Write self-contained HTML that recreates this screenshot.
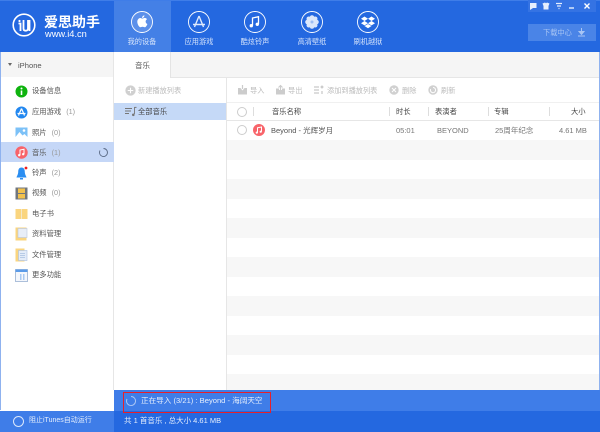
<!DOCTYPE html>
<html><head><meta charset="utf-8"><style>
html,body{margin:0;padding:0;width:600px;height:432px;overflow:hidden;background:#fff}
body{position:relative;font-family:"Liberation Sans","Noto Sans CJK SC",sans-serif;font-size:7.5px;color:#555}
#w{position:absolute;left:0;top:0;width:600px;height:432px;filter:blur(.25px)}
.a{position:absolute}
.t{position:absolute;white-space:nowrap;line-height:12px}
svg{position:absolute;overflow:visible}
.nav{position:absolute;top:37px;width:56px;text-align:center;color:#d3e2fb;font-size:7.2px;line-height:10px}
.side{position:absolute;left:32px;font-size:7.3px;color:#555;line-height:12px;white-space:nowrap}
.side i{font-style:normal;color:#999;margin-left:5px}
.th{position:absolute;top:106px;font-size:7.3px;color:#444;line-height:12px;white-space:nowrap}
.sep{position:absolute;top:107px;width:1px;height:9px;background:#ddd}
.td{position:absolute;top:125px;font-size:7.5px;color:#777;line-height:12px;white-space:nowrap}
.tb{position:absolute;top:85px;font-size:7.2px;color:#bbb;line-height:12px;white-space:nowrap}
</style></head><body><div id="w">
<div class="a" style="left:0;top:0;width:600px;height:52px;background:#2468e0"></div>
<div class="a" style="left:114px;top:0;width:57px;height:52px;background:#4480e6"></div>
<div class="a" style="left:0;top:0;width:600px;height:1px;background:#3f7de8"></div>

<svg style="left:12px;top:13px" width="24" height="24" viewBox="0 0 24 24"><circle cx="12" cy="12" r="10.8" fill="none" stroke="#fff" stroke-width="1.6"/><path d="M6.500 10.500h2v7.500M11.500 7v8.500q0 2.200 2.200 2.200t2.300-2.200V7M17.500 7v11" fill="none" stroke="#fff" stroke-width="1.800"/><circle cx="7.500" cy="8" r="1.100" fill="#fff"/></svg>
<div class="t" style="left:44px;top:14px;font-size:14px;line-height:16px;color:#fff;font-weight:bold">爱思助手</div>
<div class="t" style="left:45px;top:29px;font-size:9.300px;line-height:11px;color:#fff">www.i4.cn</div>

<svg style="left:131px;top:11px" width="22" height="22" viewBox="0 0 22 22"><circle cx="11" cy="11" r="10.500" fill="#5c90ea" stroke="#fff" stroke-width=".9"/><path d="M11.200 7.600c1-.1 1.700-.7 2.400-.7 1 0 1.900.5 2.400 1.300-2 1.200-1.700 3.900.4 4.800-.5 1.400-1.500 3.300-2.700 3.300-.8 0-1.100-.5-2.100-.5s-1.400.5-2.200.5C8.200 16.300 6.300 13.300 6.300 10.800c0-2.200 1.500-3.800 3-3.800.8 0 1.400.6 1.900.6zM11 7c0-1.300 1-2.500 2.400-2.700.1 1.500-1 2.700-2.400 2.700z" fill="#fff"/></svg>
<div class="nav" style="left:114px">我的设备</div>

<svg style="left:188px;top:11px" width="22" height="22" viewBox="0 0 22 22"><circle cx="11" cy="11" r="10.500" fill="#2468e0" stroke="#fff" stroke-width=".9"/><path d="M11 5l-4.500 11M11 5l4.500 11M5 13.500h12" fill="none" stroke="#dfeafc" stroke-width="1.400"/></svg>
<div class="nav" style="left:171px">应用游戏</div>

<svg style="left:244px;top:11px" width="22" height="22" viewBox="0 0 22 22"><circle cx="11" cy="11" r="10.500" fill="#2468e0" stroke="#fff" stroke-width=".9"/><path d="M8.500 14.500V7l6-1.300v7.300" fill="none" stroke="#fff" stroke-width="1.300"/><circle cx="7.300" cy="14.700" r="1.700" fill="#fff"/><circle cx="13.300" cy="13.300" r="1.700" fill="#fff"/></svg>
<div class="nav" style="left:227px">酷炫铃声</div>

<svg style="left:301px;top:11px" width="22" height="22" viewBox="0 0 22 22"><circle cx="11" cy="11" r="10.500" fill="#2468e0" stroke="#fff" stroke-width=".9"/><g fill="#dbe7fb"><circle cx="11" cy="6.500" r="2.300"/><circle cx="11" cy="15.500" r="2.300"/><circle cx="6.500" cy="11" r="2.300"/><circle cx="15.500" cy="11" r="2.300"/><circle cx="7.800" cy="7.800" r="2.300"/><circle cx="14.200" cy="7.800" r="2.300"/><circle cx="7.800" cy="14.200" r="2.300"/><circle cx="14.200" cy="14.200" r="2.300"/><circle cx="11" cy="11" r="4"/></g><circle cx="11" cy="11" r="1.500" fill="#9dbdf2"/></svg>
<div class="nav" style="left:284px">高清壁纸</div>

<svg style="left:357px;top:11px" width="22" height="22" viewBox="0 0 22 22"><circle cx="11" cy="11" r="10.500" fill="#2468e0" stroke="#fff" stroke-width=".9"/><path d="M7.500 5.500l3.500 2.300-3.500 2.200L4 7.800zM14.500 5.500L18 7.800l-3.500 2.200L11 7.800zM7.500 10l3.500 2.200-3.500 2.200L4 12.200zM14.500 10l3.500 2.200-3.500 2.200-3.500-2.200zM7.500 15l3.500-2 3.500 2-3.500 2.200z" fill="#fff"/></svg>
<div class="nav" style="left:340px">刷机越狱</div>

<div class="a" style="left:528px;top:0;width:68px;height:12px;background:#3573e3"></div>
<svg style="left:530px;top:2px" width="66" height="9" viewBox="0 0 66 9"><path d="M0 1h6.500v5H3L0 8z" fill="#e6effd"/><path d="M12.500 1.500l2.500-1 1 .8 1-.8 2.500 1-1 2.500v3.500h-5V4z" fill="#e6effd"/><path d="M26 1.500h6M27 4h4M28.500 6.500h1" stroke="#e6effd" stroke-width="1.300"/><path d="M39 6h5" stroke="#e6effd" stroke-width="1.400"/><path d="M54.500 1.500l5 5M59.500 1.500l-5 5" stroke="#fff" stroke-width="1.400"/></svg>
<div class="a" style="left:528px;top:24px;width:68px;height:17px;background:#4a84e7"></div>
<div class="t" style="left:543px;top:27px;font-size:7.200px;color:#a8c5f4">下载中心</div>
<svg style="left:577px;top:28px" width="9" height="9" viewBox="0 0 9 9"><path d="M4.500 0v4M2 3.500h5L4.500 6.500zM1 8h7" fill="#a8c5f4" stroke="#a8c5f4" stroke-width="1"/></svg>

<!-- sidebar -->
<div class="a" style="left:0;top:52px;width:114px;height:338px;background:#fff"></div>
<div class="a" style="left:0;top:52px;width:114px;height:25px;background:#f5f5f5"></div>
<div class="a" style="left:0;top:52px;width:1px;height:358px;background:#8fb2ef"></div>
<div class="a" style="left:113px;top:52px;width:1px;height:338px;background:#e6e6e6"></div>
<div class="a" style="left:8px;top:63px;width:0;height:0;border-left:2.500px solid transparent;border-right:2.500px solid transparent;border-top:3.500px solid #666"></div>
<div class="t" style="left:18px;top:60px;font-size:7.600px;color:#555">iPhone</div>

<div class="a" style="left:1px;top:142px;width:113px;height:20px;background:#c5d7f7"></div>

<svg style="left:15px;top:85px" width="13" height="13" viewBox="0 0 13 13"><circle cx="6.500" cy="6.500" r="6" fill="#0fb30f"/><path d="M6.500 5.500v4.500" stroke="#fff" stroke-width="1.600"/><circle cx="6.500" cy="3.500" r="1" fill="#fff"/></svg>
<div class="side" style="top:85px">设备信息</div>
<svg style="left:15px;top:106px" width="13" height="13" viewBox="0 0 13 13"><circle cx="6.500" cy="6.500" r="6" fill="#2388f0"/><path d="M6.500 2.500L3.500 9.500M6.500 2.500l3 7M2.500 7.500h8" fill="none" stroke="#fff" stroke-width="1.200"/></svg>
<div class="side" style="top:106px">应用游戏<i>(1)</i></div>
<svg style="left:15px;top:127px" width="13" height="12" viewBox="0 0 13 12"><rect x="0.500" y="0.500" width="12" height="11" fill="#7cc1f7"/><circle cx="9" cy="3.500" r="1.300" fill="#fff"/><path d="M0.500 10L4.500 5l3 3.500 2-1.500 3 3v1.500h-12z" fill="#fff"/></svg>
<div class="side" style="top:127px">照片<i>(0)</i></div>
<svg style="left:15px;top:146px" width="13" height="13" viewBox="0 0 13 13"><circle cx="6.500" cy="6.500" r="6.200" fill="#f8646a"/><path d="M5 9V4l4-.8v4.800" fill="none" stroke="#fff" stroke-width="1"/><circle cx="4.200" cy="9.200" r="1.200" fill="#fff"/><circle cx="8.200" cy="8.200" r="1.200" fill="#fff"/></svg>
<div class="side" style="top:147px">音乐<i>(1)</i></div>
<svg style="left:99px;top:148px" width="9" height="9" viewBox="0 0 9 9"><path d="M4.500.5a4 4 0 1 1-3.500 2" fill="none" stroke="#5a6a85" stroke-width=".9"/></svg>
<svg style="left:15px;top:166px" width="13" height="14" viewBox="0 0 13 14"><path d="M6.500 1.500c2.500 0 3.300 2 3.300 4.500 0 2.500 1.700 4.500 1.700 5.500h-10c0-1 1.700-3 1.700-5.500 0-2.500.8-4.500 3.300-4.500z" fill="#2a8ef2"/><path d="M5 12h3v1.500H5z" fill="#2a8ef2"/><circle cx="11" cy="2" r="1.400" fill="#f01c1c"/></svg>
<div class="side" style="top:167px">铃声<i>(2)</i></div>
<svg style="left:15px;top:187px" width="13" height="13" viewBox="0 0 13 13"><rect x=".5" y=".5" width="12" height="12" fill="#70767e"/><rect x="3" y="1.500" width="7" height="4.500" fill="#f2c14d"/><rect x="3" y="7" width="7" height="4.500" fill="#f2c14d"/></svg>
<div class="side" style="top:187px">视频<i>(0)</i></div>
<svg style="left:15px;top:208px" width="13" height="12" viewBox="0 0 13 12"><rect x=".5" y="1" width="5.500" height="10" fill="#fad57f"/><rect x="7" y="1" width="5.500" height="10" fill="#fad57f"/><rect x="6" y="1" width="1" height="10" fill="#f4e8c8"/></svg>
<div class="side" style="top:208px">电子书</div>
<svg style="left:15px;top:227px" width="13" height="14" viewBox="0 0 13 14"><rect x=".5" y=".5" width="11" height="13" fill="#fad57f"/><rect x="3" y="1.500" width="9" height="9" fill="#e8eef8" stroke="#b9c7de" stroke-width=".6"/></svg>
<div class="side" style="top:228px">资料管理</div>
<svg style="left:15px;top:248px" width="13" height="14" viewBox="0 0 13 14"><rect x=".5" y=".5" width="9" height="13" fill="#fad57f"/><rect x="3.500" y="2.500" width="8.500" height="10" fill="#e3ecf9" stroke="#a9c0e0" stroke-width=".6"/><path d="M5 5.500h5M5 7.500h5M5 9.500h5" stroke="#a9c0e0" stroke-width=".7"/></svg>
<div class="side" style="top:249px">文件管理</div>
<svg style="left:15px;top:269px" width="13" height="13" viewBox="0 0 13 13"><rect x=".5" y=".5" width="12" height="12" fill="#f4f7fc" stroke="#8aa6cc" stroke-width=".7"/><rect x=".5" y=".5" width="12" height="2.500" fill="#5b9be8"/><path d="M5 6h1.500M8 6h1.500M5 8h1.500M8 8h1.500M5 10h1.500M8 10h1.500" stroke="#5b9be8" stroke-width="1"/></svg>
<div class="side" style="top:269px">更多功能</div>

<!-- tab bar -->
<div class="a" style="left:114px;top:52px;width:486px;height:25px;background:#f5f5f5;border-bottom:1px solid #e6e6e6"></div>
<div class="a" style="left:114px;top:52px;width:57px;height:26px;background:#fff;border-right:1px solid #e4e4e4;box-sizing:border-box"></div>
<div class="t" style="left:135px;top:60px;font-size:7.500px;color:#555">音乐</div>

<!-- toolbar -->
<svg style="left:125px;top:85px" width="11" height="11" viewBox="0 0 10 10"><circle cx="5" cy="5" r="4.700" fill="#d0d0d0"/><path d="M5 2.500v5M2.500 5h5" stroke="#fff" stroke-width="1"/></svg>
<div class="tb" style="left:138px">新建播放列表</div>
<div class="a" style="left:226px;top:78px;width:1px;height:312px;background:#e6e6e6"></div>

<svg style="left:237px;top:85px" width="11" height="10" viewBox="0 0 11 10"><path d="M1 3v6.500h9V3H7.500L5.500 5.500 3.500 3z" fill="#ccc"/><path d="M5.500 0v4" stroke="#ccc" stroke-width="1.200"/></svg>
<div class="tb" style="left:250px">导入</div>
<svg style="left:275px;top:85px" width="11" height="10" viewBox="0 0 11 10"><path d="M1 3.500v6h9v-6H7v1.500H4V3.500z" fill="#ccc"/><path d="M5.500 5V1M3.500 2.500l2-2 2 2" stroke="#ccc" stroke-width="1.100" fill="none"/></svg>
<div class="tb" style="left:288px">导出</div>
<svg style="left:314px;top:85px" width="11" height="10" viewBox="0 0 11 10"><path d="M0 2h5M0 5h5M0 8h5M8 .5v3M6.500 2h3M8 6v3" stroke="#bbb" stroke-width="1"/></svg>
<div class="tb" style="left:327px">添加到播放列表</div>
<svg style="left:389px;top:85px" width="10" height="10" viewBox="0 0 10 10"><circle cx="5" cy="5" r="4.700" fill="#d0d0d0"/><path d="M3 3l4 4M7 3l-4 4" stroke="#fff" stroke-width="1"/></svg>
<div class="tb" style="left:402px">删除</div>
<svg style="left:428px;top:85px" width="10" height="10" viewBox="0 0 10 10"><circle cx="5" cy="5" r="4.700" fill="#d0d0d0"/><path d="M5 2.500a2.600 2.600 0 1 1-2.400 1.600" stroke="#fff" stroke-width="1" fill="none"/></svg>
<div class="tb" style="left:441px">刷新</div>

<!-- left list -->
<div class="a" style="left:114px;top:103px;width:112px;height:17px;background:#c5d9f7"></div>
<svg style="left:125px;top:107px" width="13" height="10" viewBox="0 0 13 10"><path d="M0 1.500h7M0 4h6M0 6.500h4" stroke="#777" stroke-width=".9"/><path d="M9.500 0v7" stroke="#777" stroke-width=".9"/><circle cx="8.300" cy="7.800" r="1.300" fill="#777"/><path d="M9.500 .4h2" stroke="#777" stroke-width="1"/></svg>
<div class="t" style="left:138px;top:106px;font-size:7.300px;color:#444">全部音乐</div>

<!-- table -->
<div class="a" style="left:227px;top:102px;width:372px;height:1px;background:#f0f0f0"></div>
<div class="a" style="left:227px;top:120px;width:372px;height:1px;background:#e6e6e6"></div>
<div class="a" style="left:227px;top:140px;width:372px;height:20px;background:#f7f7f7"></div>
<div class="a" style="left:227px;top:179px;width:372px;height:20px;background:#f7f7f7"></div>
<div class="a" style="left:227px;top:218px;width:372px;height:20px;background:#f7f7f7"></div>
<div class="a" style="left:227px;top:257px;width:372px;height:20px;background:#f7f7f7"></div>
<div class="a" style="left:227px;top:296px;width:372px;height:20px;background:#f7f7f7"></div>
<div class="a" style="left:227px;top:335px;width:372px;height:20px;background:#f7f7f7"></div>
<div class="a" style="left:227px;top:374px;width:372px;height:16px;background:#f7f7f7"></div>

<div class="a" style="left:237px;top:107px;width:8px;height:8px;border:1px solid #ccc;border-radius:50%"></div>
<div class="sep" style="left:253px"></div>
<div class="th" style="left:272px">音乐名称</div>
<div class="sep" style="left:389px"></div>
<div class="th" style="left:396px">时长</div>
<div class="sep" style="left:428px"></div>
<div class="th" style="left:435px">表演者</div>
<div class="sep" style="left:488px"></div>
<div class="th" style="left:494px">专辑</div>
<div class="sep" style="left:549px"></div>
<div class="th" style="left:571px">大小</div>

<div class="a" style="left:237px;top:125px;width:8px;height:8px;border:1px solid #ccc;border-radius:50%"></div>
<svg style="left:253px;top:124px" width="12" height="12" viewBox="0 0 12 12"><circle cx="6" cy="6" r="6" fill="#f8646a"/><path d="M4.500 8.500V3.800L8.500 3v4.500" fill="none" stroke="#fff" stroke-width="1"/><circle cx="3.800" cy="8.600" r="1.100" fill="#fff"/><circle cx="7.700" cy="7.700" r="1.100" fill="#fff"/></svg>
<div class="td" style="left:271px;color:#555">Beyond - 光辉岁月</div>
<div class="td" style="left:396px">05:01</div>
<div class="td" style="left:437px">BEYOND</div>
<div class="td" style="left:495px">25周年纪念</div>
<div class="td" style="left:559px">4.61 MB</div>

<div class="a" style="left:599px;top:52px;width:1px;height:358px;background:#8fb2ef"></div>

<!-- footer -->
<div class="a" style="left:114px;top:390px;width:486px;height:21px;background:#3f7de8"></div>
<div class="a" style="left:0;top:411px;width:114px;height:21px;background:#3f7de8"></div>
<div class="a" style="left:114px;top:411px;width:486px;height:21px;background:#2468e0"></div>
<svg style="left:126px;top:396px" width="10" height="10" viewBox="0 0 10 10"><path d="M5 .5a4.500 4.500 0 1 1-4 2.500" fill="none" stroke="#a9c5f4" stroke-width="1"/></svg>
<div class="t" style="left:141px;top:395px;font-size:7.600px;color:#e6effd">正在导入 (3/21) : Beyond - 海阔天空</div>
<div class="a" style="left:123px;top:392px;width:148px;height:21px;border:1.500px solid #e8202a;box-sizing:border-box"></div>
<div class="a" style="left:13px;top:416px;width:9px;height:9px;border:1px solid #dbe7fb;border-radius:50%"></div>
<div class="t" style="left:29px;top:415px;font-size:7px;color:#e6effd">阻止iTunes自动运行</div>
<div class="t" style="left:124px;top:415px;font-size:7.500px;color:#e6effd">共 1 首音乐 , 总大小 4.61 MB</div>
</div></body></html>
